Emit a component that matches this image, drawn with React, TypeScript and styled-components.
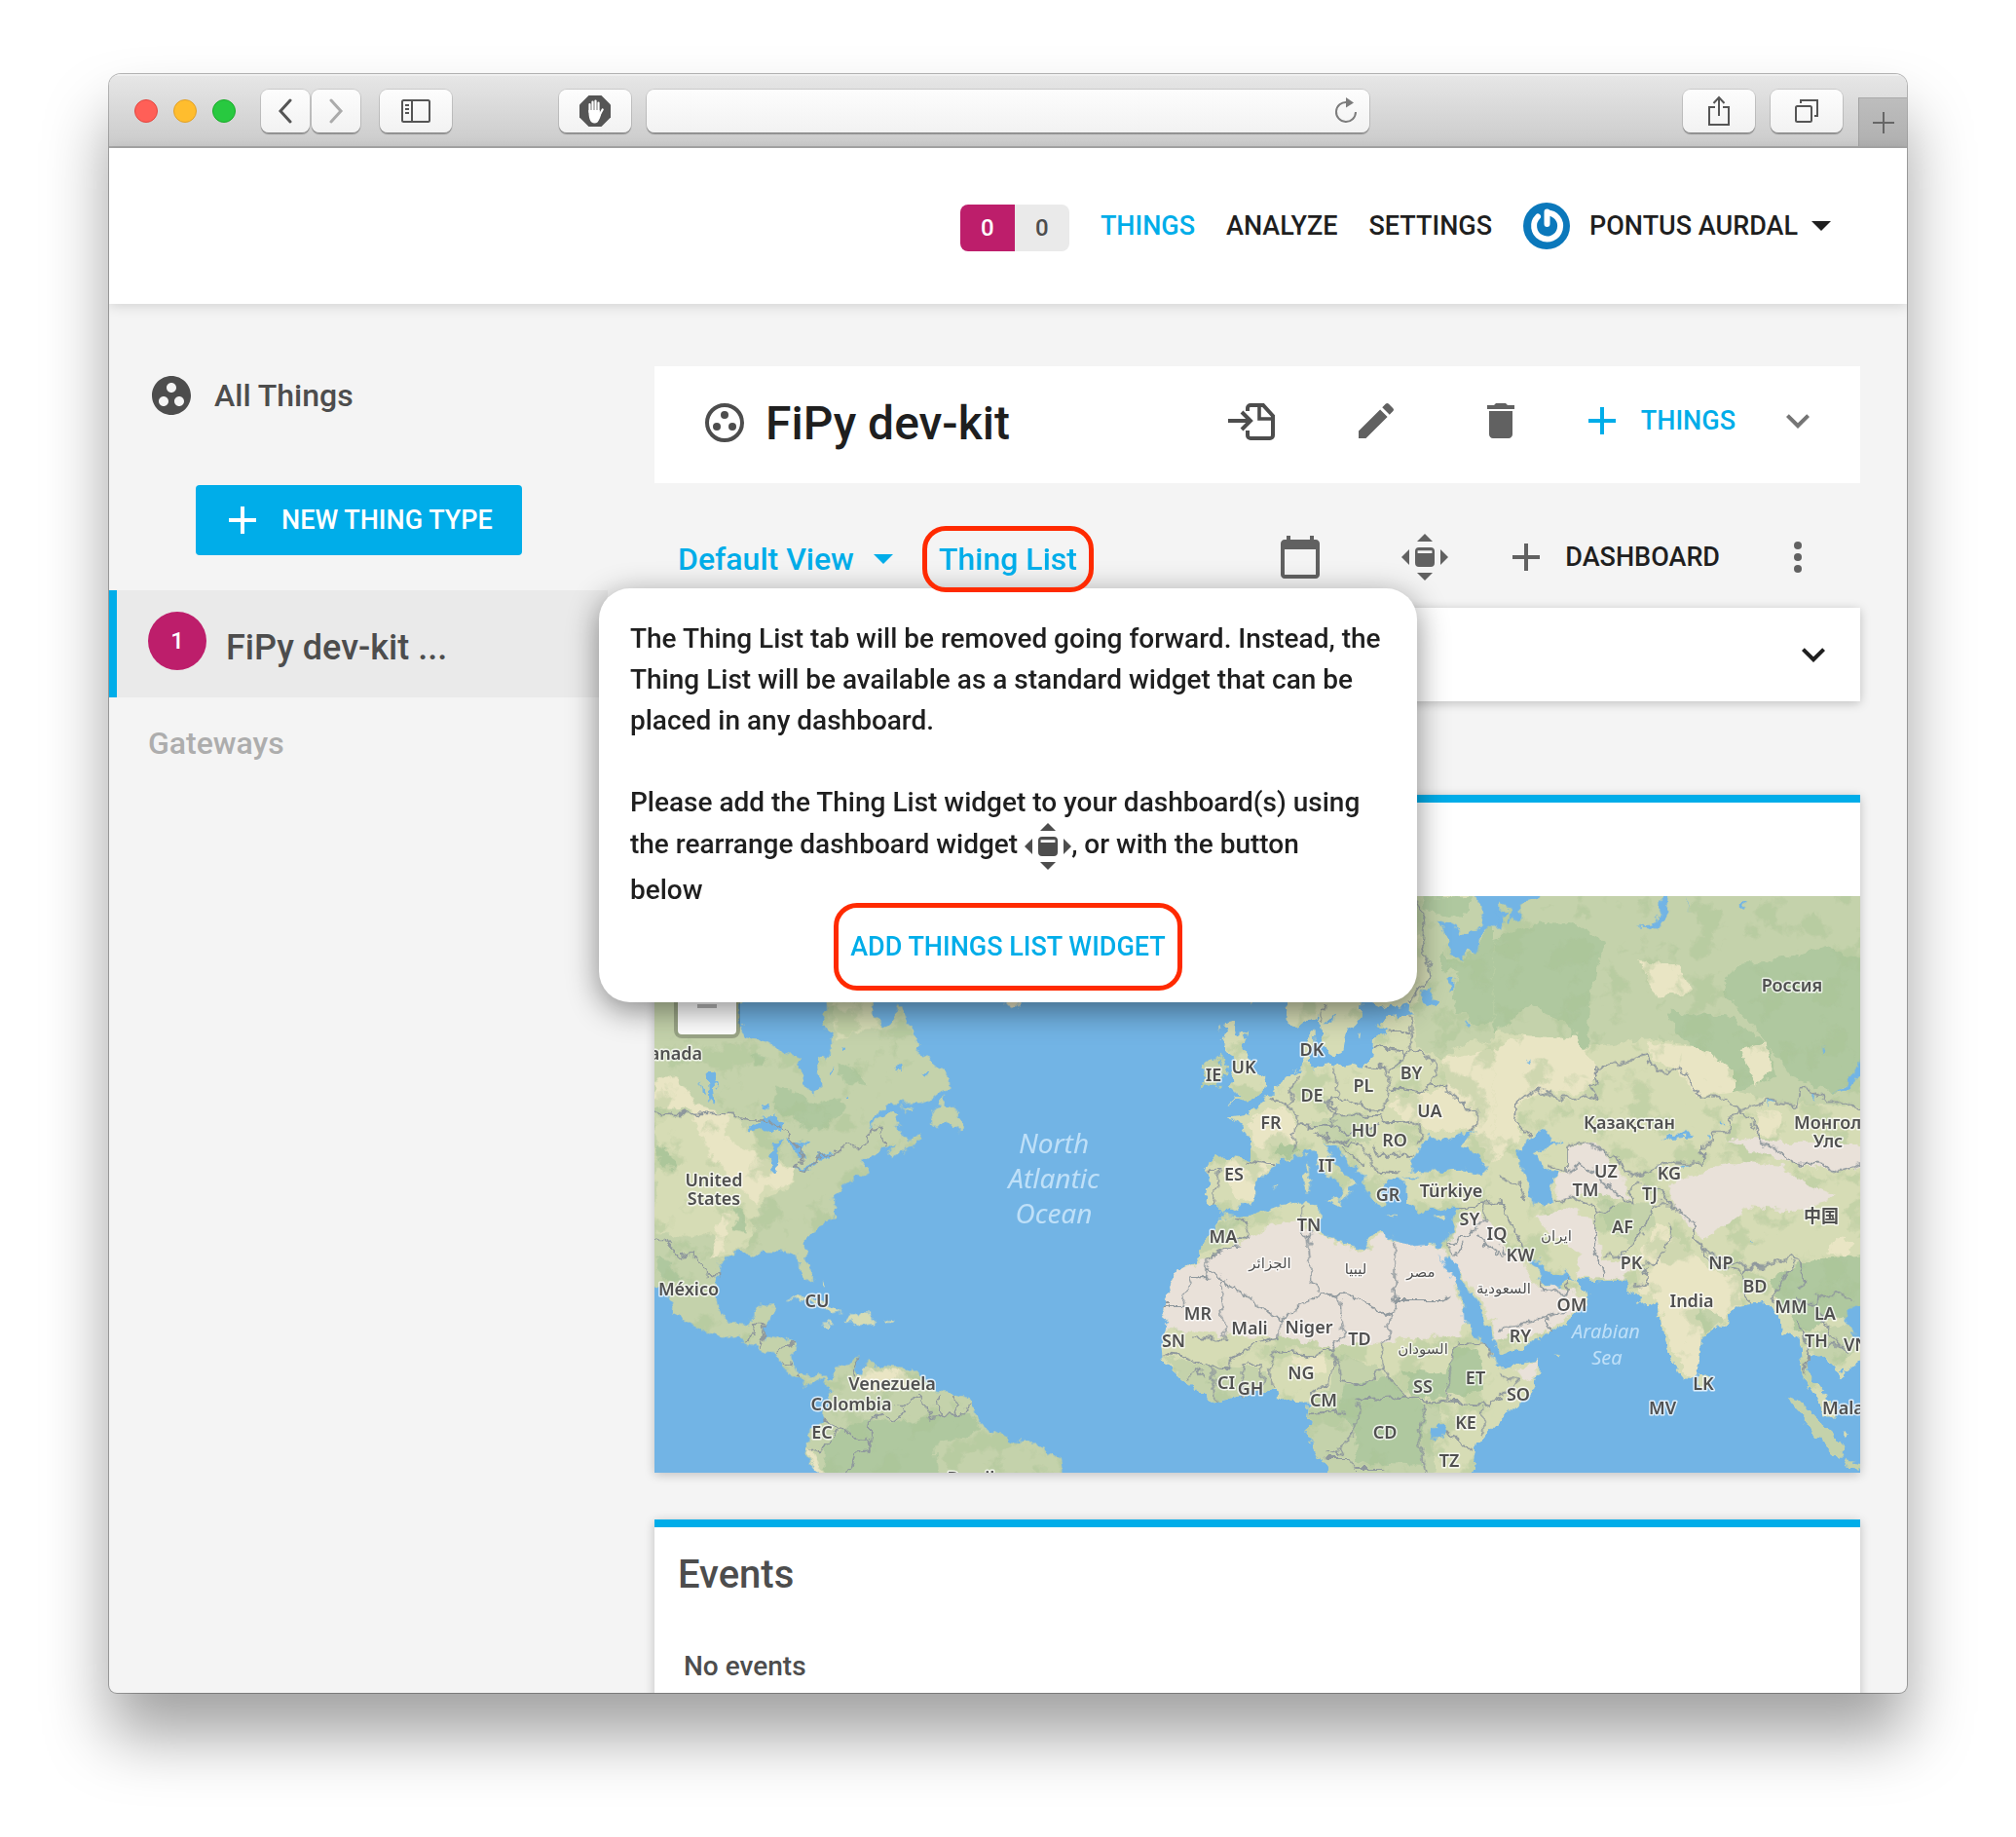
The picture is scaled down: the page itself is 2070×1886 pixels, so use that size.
import React from 'react';
import styled, { createGlobalStyle, css } from 'styled-components';

const color = {
  blue: '#00ade9',
  magenta: '#bd1e6b',
  red: '#ff2a00',
  ink: '#1f1f1f',
  grey: '#4d4d4d',
  icon: '#616161',
  page: '#f4f4f4',
};

const GlobalStyle = createGlobalStyle`
  *, *::before, *::after { box-sizing: border-box; }
  body { margin: 0; background: #fff; font-family: Roboto, "Open Sans", sans-serif; font-weight: 500; color: ${color.ink}; }
  button, input, select { font: inherit; color: inherit; }
  h1, h2, p { margin: 0; padding: 0; font-weight: 500; }
`;

/* ---------- window frame ---------- */

const Desktop = styled.div`
  height: 100vh;
  padding: 76px 112px 148px;
  display: flex;
`;

const Window = styled.div`
  flex: 1;
  min-width: 0;
  display: flex;
  flex-direction: column;
  overflow: hidden;
  border-radius: 12px 12px 8px 8px;
  background: ${color.page};
  box-shadow: 0 0 0 1px rgba(0, 0, 0, 0.28), 0 44px 66px rgba(0, 0, 0, 0.37);
`;

const Toolbar = styled.div`
  flex: none;
  height: 76px;
  display: grid;
  grid-template-columns: minmax(0, 1fr) minmax(0, 742px) minmax(0, 1fr);
  column-gap: 16px;
  align-items: center;
  background: linear-gradient(#e6e6e6, #cbcbcb);
  border-top: 2px solid #efefef;
  border-bottom: 2px solid #a8a8a8;
`;

const ToolbarSide = styled.div<{ $end?: boolean }>`
  height: 100%;
  display: flex;
  align-items: center;
  gap: ${(p) => (p.$end ? '16px' : '20px')};
  padding-left: ${(p) => (p.$end ? '0' : '26px')};
  justify-content: ${(p) => (p.$end ? 'flex-end' : 'flex-start')};
`;

const Lights = styled.div`
  display: flex;
  gap: 16px;
  margin-right: 6px;
`;

const Light = styled.button<{ $fill: string; $edge: string }>`
  width: 24px;
  height: 24px;
  padding: 0;
  border-radius: 50%;
  border: 1px solid ${(p) => p.$edge};
  background: ${(p) => p.$fill};
`;

const ButtonPair = styled.div`
  display: flex;
  gap: 2px;
`;

const chrome = css`
  height: 44px;
  border: 0;
  border-radius: 8px;
  background: linear-gradient(#fdfdfd, #f2f2f2);
  box-shadow: 0 0 0 1px rgba(0, 0, 0, 0.1), 0 2px 1px rgba(0, 0, 0, 0.28);
`;

const ChromeButton = styled.button<{ $narrow?: boolean; $push?: boolean }>`
  ${chrome}
  width: ${(p) => (p.$narrow ? '50px' : '74px')};
  margin-left: ${(p) => (p.$push ? 'auto' : '0')};
  padding: 0;
  display: grid;
  place-items: center;
`;

const Address = styled.div`
  ${chrome}
  display: flex;
  align-items: center;
  padding-right: 10px;
`;

const AddressInput = styled.input`
  flex: 1;
  min-width: 0;
  height: 100%;
  border: 0;
  background: transparent;
  padding: 0 16px;
`;

const BareButton = styled.button`
  border: 0;
  padding: 0;
  background: none;
  display: grid;
  place-items: center;
`;

const NewTab = styled(BareButton)`
  align-self: flex-end;
  width: 50px;
  height: 50px;
  background: linear-gradient(#bdbdbd, #b0b0b0);
  border-left: 1px solid #a2a2a2;
  border-top: 1px solid #aaa;
`;

/* ---------- application header ---------- */

const Header = styled.header`
  flex: none;
  position: relative;
  z-index: 1;
  height: 160px;
  padding-right: 78px;
  display: flex;
  align-items: center;
  justify-content: flex-end;
  gap: 32px;
  background: #fff;
  box-shadow: 0 2px 12px rgba(0, 0, 0, 0.14);
  font-size: 27px;
`;

const Counters = styled.div`
  display: flex;
  height: 48px;
  margin-top: 4px;
  border-radius: 8px;
  overflow: hidden;
`;

const Counter = styled.span<{ $alert?: boolean }>`
  width: 56px;
  display: grid;
  place-items: center;
  font-size: 24px;
  color: ${(p) => (p.$alert ? '#fff' : color.grey)};
  background: ${(p) => (p.$alert ? color.magenta : '#eaeaea')};
`;

const Nav = styled.nav`
  display: flex;
  gap: 32px;
`;

const NavLink = styled.a<{ $active?: boolean }>`
  text-decoration: none;
  color: ${(p) => (p.$active ? color.blue : color.ink)};
`;

const UserButton = styled(BareButton)`
  display: flex;
  align-items: center;
  gap: 20px;
`;

const UserName = styled.span`
  display: flex;
  align-items: center;
  gap: 14px;
`;

/* ---------- sidebar ---------- */

const Body = styled.div`
  flex: 1;
  min-height: 0;
  display: grid;
  grid-template-columns: 512px minmax(0, 1fr);
`;

const Sidebar = styled.aside`
  padding-top: 64px;
  font-size: 32px;
  color: ${color.grey};
`;

const AllThings = styled.a`
  height: 60px;
  padding-left: 40px;
  display: flex;
  align-items: center;
  gap: 20px;
  color: inherit;
  text-decoration: none;
`;

const NewTypeButton = styled.button`
  height: 72px;
  margin: 62px 0 36px 89px;
  padding: 0 30px 0 24px;
  border: 0;
  border-radius: 4px;
  display: flex;
  align-items: center;
  gap: 16px;
  background: ${color.blue};
  color: #fff;
  font-size: 27px;
`;

const TypeLink = styled.a`
  height: 110px;
  padding: 0 0 6px 32px;
  border-left: 8px solid ${color.blue};
  display: flex;
  align-items: center;
  gap: 20px;
  background: #eaeaea;
  color: inherit;
  text-decoration: none;
`;

const TypeName = styled.span`
  padding-top: 14px;
  font-size: 36px;
  line-height: 42px;
`;

const TypeCount = styled.span`
  width: 60px;
  height: 60px;
  border-radius: 50%;
  display: grid;
  place-items: center;
  background: ${color.magenta};
  color: #fff;
  font-size: 24px;
`;

const SectionLabel = styled.h2`
  padding: 26px 40px;
  font-size: 32px;
  line-height: 42px;
  color: #adadad;
`;

/* ---------- main column ---------- */

const Main = styled.main`
  padding: 64px 48px 0;
  min-height: 0;
`;

const TitleCard = styled.section`
  height: 120px;
  padding: 0 40px 4px 48px;
  display: flex;
  align-items: center;
  gap: 18px;
  background: #fff;
`;

const Title = styled.h1`
  font-size: 48px;
`;

const Actions = styled.div`
  margin-left: auto;
  padding-bottom: 4px;
  display: flex;
  align-items: center;
  gap: 80px;
`;

const ActionGroup = styled.div<{ $wide?: boolean }>`
  display: flex;
  align-items: center;
  gap: ${(p) => (p.$wide ? '56px' : '40px')};
  margin-left: -24px;
`;

const IconButton = styled(BareButton)<{ $tone?: string }>`
  color: ${(p) => p.$tone || color.icon};
`;

const TextButton = styled(BareButton)<{ $tone?: string }>`
  display: flex;
  align-items: center;
  gap: 16px;
  font-size: 27px;
  color: ${(p) => p.$tone || color.ink};
`;

const ViewBar = styled.div`
  height: 68px;
  margin: 44px 0 16px;
  padding: 0 40px 0 24px;
  display: flex;
  align-items: center;
`;

const ViewPicker = styled.label`
  display: flex;
  align-items: center;
  gap: 20px;
  margin-right: 30px;
  color: ${color.blue};
`;

const ViewSelect = styled.select`
  appearance: none;
  border: 0;
  padding: 0;
  background: none;
  font-size: 32px;
  line-height: 42px;
`;

const PopoverAnchor = styled.div`
  position: relative;
  z-index: 2;
`;

const outlined = css`
  border: 5px solid ${color.red};
  border-radius: 24px;
  background: none;
  color: ${color.blue};
`;

const TabButton = styled.button`
  ${outlined}
  position: relative;
  z-index: 1;
  height: 68px;
  padding: 0 12px;
  font-size: 32px;
`;

const Popover = styled.div`
  position: absolute;
  top: 64px;
  left: 50%;
  width: 840px;
  transform: translateX(-50%);
  padding: 31px 32px 12px;
  border-radius: 32px;
  background: #fff;
  box-shadow: 0 8px 32px rgba(0, 0, 0, 0.45);
  display: flex;
  flex-direction: column;
`;

const Message = styled.p`
  font-size: 28px;
  line-height: 42px;
  & + & { margin-top: 42px; }
  svg { vertical-align: middle; color: ${color.grey}; }
`;

const AddWidgetButton = styled.button`
  ${outlined}
  align-self: center;
  height: 90px;
  margin-top: -8px;
  padding: 0 12px;
  font-size: 27px;
`;

const Card = styled.section<{ $accent?: boolean; $gap?: number }>`
  margin-top: ${(p) => p.$gap || 0}px;
  border-top: ${(p) => (p.$accent ? `8px solid ${color.blue}` : '0')};
  background: #fff;
  box-shadow: 0 2px 10px rgba(0, 0, 0, 0.22);
`;

const FilterRow = styled.div`
  height: 96px;
  padding-right: 24px;
  display: flex;
  align-items: center;
  justify-content: flex-end;
`;

const CardTitle = styled.h2`
  height: 96px;
  padding: 0 24px;
  display: flex;
  align-items: center;
  font-size: 40px;
  color: ${color.grey};
`;

const CardText = styled.p`
  padding: 26px 30px;
  font-size: 28px;
  line-height: 42px;
  color: ${color.grey};
`;

/* ---------- map ---------- */

const MapFrame = styled.div`
  position: relative;
  overflow: hidden;
`;

const MapDrawing = styled.svg`
  display: block;
  width: 100%;
  height: auto;
  background: #72b4e5;
  font-family: "Noto Sans", "DejaVu Sans", "Noto Sans CJK SC", sans-serif;
`;

const ZoomControl = styled.div`
  position: absolute;
  left: 20px;
  top: 18px;
  border: 4px solid rgba(0, 0, 0, 0.22);
  border-radius: 8px;
  background: #fff padding-box;
`;

const ZoomButton = styled(BareButton)`
  width: 60px;
  height: 60px;
  & + & { border-top: 1px solid #ccc; }
`;

const Place = styled.text<{ $small?: boolean }>`
  font-size: ${(p) => (p.$small ? '15px' : '18px')};
  font-weight: ${(p) => (p.$small ? 400 : 600)};
  fill: #505050;
  stroke: #fff;
  stroke-width: 3px;
  stroke-opacity: 0.75;
  stroke-linejoin: round;
  paint-order: stroke;
`;

const Sea = styled.text<{ $size: number }>`
  font-size: ${(p) => p.$size}px;
  font-weight: 400;
  font-style: italic;
  fill: #bfe0f8;
  text-anchor: middle;
`;

type Anchor = 'start' | 'middle' | 'end';

const places: [string, number, number, Anchor?][] = [
  ['Canada', 721, 1088, 'end'], ['United', 733, 1218], ['States', 733, 1237],
  ['México', 707, 1330], ['CU', 839, 1342], ['Venezuela', 916, 1427],
  ['Colombia', 874, 1448], ['EC', 844, 1477], ['Brasil', 997, 1524],
  ['DK', 1347, 1084], ['IE', 1246, 1110], ['UK', 1277, 1102], ['DE', 1347, 1131],
  ['PL', 1400, 1121], ['BY', 1449, 1108], ['UA', 1468, 1147], ['FR', 1305, 1159],
  ['HU', 1401, 1167], ['RO', 1432, 1177], ['IT', 1362, 1203], ['ES', 1267, 1212],
  ['GR', 1425, 1233], ['Türkiye', 1490, 1229], ['SY', 1509, 1258], ['IQ', 1537, 1273],
  ['TN', 1344, 1264], ['MA', 1256, 1276], ['MR', 1230, 1355], ['Mali', 1283, 1370],
  ['Niger', 1344, 1369], ['TD', 1396, 1381], ['SN', 1205, 1383], ['CI', 1259, 1426],
  ['GH', 1284, 1432], ['NG', 1336, 1416], ['CM', 1359, 1444], ['SS', 1461, 1430],
  ['ET', 1515, 1421], ['CD', 1422, 1477], ['KE', 1505, 1467], ['TZ', 1488, 1506],
  ['KW', 1561, 1295], ['OM', 1614, 1346], ['RY', 1561, 1378],
  ['SO', 1559, 1438], ['AF', 1666, 1266], ['PK', 1675, 1303],
  ['NP', 1767, 1303], ['India', 1737, 1342], ['BD', 1802, 1327], ['MM', 1839, 1348],
  ['LA', 1874, 1355], ['TH', 1865, 1383], ['VN', 1893, 1387, 'start'], ['LK', 1749, 1427],
  ['MV', 1707, 1452], ['Malaysia', 1871, 1452, 'start'], ['UZ', 1649, 1209], ['TM', 1628, 1228],
  ['KG', 1714, 1211], ['TJ', 1694, 1232], ['Қазақстан', 1673, 1159],
  ['Монгол', 1842, 1159, 'start'], ['Улс', 1877, 1178], ['中国', 1870, 1255], ['Россия', 1840, 1018],
];

const arabicPlaces: [string, number, number][] = [
  ['الجزائر', 1304, 1302], ['ليبيا', 1392, 1308], ['مصر', 1459, 1311],
  ['السودان', 1461, 1390], ['السعودية', 1544, 1328], ['ایران', 1598, 1274],
];

const seas: [string, number, number, number][] = [
  ['North', 1082, 1184, 28], ['Atlantic', 1082, 1220, 28], ['Ocean', 1082, 1256, 28],
  ['Arabian', 1649, 1374, 20], ['Sea', 1650, 1401, 20],
];

const AMERICAS = 'translate(660 1000) scale(.33333)';
const EUROPE = 'translate(1160 900) scale(.33333 .3954)';
const ASIA = 'translate(1540 900) scale(.33333 .3954)';

const water = '#72b4e5';
const pale = '#d6dcb5';
const sand = '#e9e5c4';
const green = '#c4d2ab';
const forest = '#afc89f';
const desert = '#e9e1d9';

type Shape = [string, string];

const americas: Shape[] = [
  [green, '36,-260 300,-260 300,150 312,195 345,200 390,215 430,240 485,262 490,310 510,345 527,368 548,345 540,300 535,268 565,255 583,225 580,190 550,150 568,115 565,60 700,60 710,125 740,160 770,135 785,90 800,125 822,160 840,195 843,230 880,262 915,285 938,315 940,350 910,365 880,390 850,397 760,400 735,420 705,450 690,478 720,450 750,430 790,430 775,450 790,475 800,500 830,510 855,490 865,508 830,525 790,550 765,565 762,545 780,525 745,535 700,560 685,575 692,610 650,628 625,640 610,670 597,698 585,700 595,720 590,750 560,770 520,800 500,830 502,870 520,910 522,940 505,945 485,910 478,870 455,858 420,850 365,850 355,868 320,858 275,862 235,890 228,930 225,980 235,1030 262,1070 320,1075 340,1060 350,1020 405,1018 400,1050 380,1080 372,1120 400,1125 440,1115 470,1135 462,1170 465,1200 475,1225 510,1240 545,1230 575,1250 570,1270 550,1245 515,1265 480,1250 430,1218 425,1190 395,1165 360,1155 310,1138 290,1110 250,1120 190,1100 130,1070 95,1040 90,1010 60,970 20,940 20,-260'],
  [green, '570,1255 600,1215 630,1200 665,1180 650,1215 665,1240 690,1195 740,1210 800,1215 830,1212 845,1225 860,1250 905,1280 965,1290 1005,1310 1020,1345 1035,1385 1080,1405 1130,1435 1210,1445 1250,1475 1290,1490 1296,1560 550,1560 505,1480 510,1450 515,1400 560,1370 570,1320 580,1290'],
  [green, '940,362 930,395 965,420 975,440 990,465 985,490 970,475 940,460 880,462 895,430 915,395'],
  [green, '795,405 830,415 835,425 810,420'],
  [pale, '448,1005 480,988 530,1000 575,1020 622,1040 580,1045 560,1025 500,1002'],
  [pale, '640,1050 690,1048 720,1070 670,1080 650,1070 620,1075'],
  [pale, '557,1072 587,1075 575,1082'],
  [pale, '745,1070 768,1074 760,1080 746,1078'],
  [pale, '555,950 566,965 558,968'],
  [sand, '1110,60 1160,60 1155,95 1140,108 1120,95'],
  [pale, '585,84 700,84 712,140 740,170 700,175 650,180 600,210 590,160'],
  [pale, '36,435 270,435 330,480 380,540 470,600 470,650 380,690 340,760 330,840 240,870 215,800 130,810 36,800'],
  [sand, '36,330 90,315 130,350 165,410 262,430 250,500 350,560 470,600 465,650 370,660 350,720 290,640 210,560 160,450 150,415 36,412'],
  [sand, '240,740 270,735 265,800 230,870 210,880 225,800'],
  [forest, '410,350 480,370 520,400 600,380 630,410 560,470 510,490 460,440 400,420'],
  [forest, '330,240 385,250 370,280 340,270'],
  [forest, '36,530 80,540 100,600 60,590'],
  [forest, '280,720 310,740 320,800 290,790'],
  [forest, '600,270 660,300 690,350 620,330'],
  [forest, '36,870 70,880 120,940 90,950 50,920'],
  [forest, '620,1400 690,1370 780,1380 1010,1350 1040,1400 980,1430 900,1450 910,1560 560,1560 560,1450'],
  [sand, '680,1210 800,1230 850,1260 720,1290 640,1260'],
  [sand, '510,1450 530,1490 560,1540 580,1560 545,1560 515,1490'],
];

const americanWater = [
  '320,488 345,465 395,435 440,465 430,490 375,475', '400,520 430,505 415,540 418,590 400,608 390,570',
  '440,505 480,515 520,520 490,545 495,570 480,565 465,530', '470,605 540,575 545,585 480,612',
  '540,560 585,550 580,568 545,572', '200,300 220,300 235,350 215,340 220,400 205,390',
  '180,330 195,370 185,365', '372,400 386,402 382,418 374,416', '570,300 590,292 580,306',
  '775,292 800,284 800,296 780,298', '625,380 640,370 634,384', '862,302 882,295 874,308',
  '610,225 628,232 618,238', '660,1215 675,1218 672,1235 662,1230',
];

const europe: Shape[] = [
  [pale, '700,0 1150,0 1150,1265 1130,1272 1145,1360 1150,1405 1110,1440 1070,1480 1050,1580 630,1580 600,1500 545,1440 555,1365 480,1362 430,1330 340,1350 260,1362 165,1310 105,1260 100,1210 118,1150 100,1110 160,1015 200,1000 230,960 290,875 265,850 230,845 245,770 230,750 240,735 300,728 365,732 370,690 350,650 325,640 312,625 358,620 365,605 400,600 425,565 465,545 480,520 525,505 535,480 525,440 565,405 570,430 550,455 548,480 570,500 610,490 640,495 690,485 720,490 745,475 750,420 770,410 800,400 762,385 795,365 868,355 870,330 790,343 750,325 705,320'],
  [pale, '478,300 720,300 710,365 675,400 665,450 615,465 590,410 580,362 545,378 520,395 485,370'],
  [pale, '300,385 335,378 325,405 358,408 345,440 365,470 385,510 418,525 412,560 385,575 330,575 297,592 330,560 302,550 325,530 310,510 325,470 300,455 283,425'],
  [green, '250,475 285,465 295,500 275,540 215,555 235,525 220,495'],
  [green, '840,51 1150,51 1150,420 1050,430 960,470 880,440 870,355 900,300 925,250 900,180'],
  [forest, '900,51 1060,51 1030,100 960,100 905,80'],
  [forest, '1090,150 1150,100 1150,380 1060,380 1000,330 1010,250 960,240 960,200 1030,225'],
  [sand, '960,470 1110,450 1150,470 1150,760 1090,720 1060,650 950,660 860,640 800,590 830,570 930,560 970,540'],
  [sand, '290,728 440,745 390,790 380,835 340,840 300,800'],
  [sand, '370,620 480,600 510,640 500,700 380,700'],
  [forest, '470,690 530,710 500,735 440,720'],
  [green, '560,640 700,610 760,660 730,690 600,690'],
  [desert, '245,990 330,955 440,905 520,890 560,920 640,950 720,975 780,925 820,945 970,965 1000,1060 1035,1150 1010,1195 900,1195 770,1215 620,1220 480,1195 300,1190 110,1175 118,1150 100,1110 160,1015'],
  [desert, '1010,905 1070,870 1150,930 1150,1180 1100,1130 1050,1060 1000,1010 980,950'],
  [green, '230,945 290,885 350,890 270,975 220,975'],
  [green, '105,1245 250,1270 420,1280 440,1330 340,1350 260,1362 165,1310'],
  [sand, '480,1220 610,1225 600,1290 500,1260'],
  [green, '640,1240 760,1270 850,1350 960,1365 930,1580 630,1580 545,1440 560,1365 620,1320'],
  [forest, '660,1320 800,1295 850,1350 915,1370 900,1450 900,1530 700,1520 690,1430 640,1400'],
  [forest, '1000,1230 1080,1230 1090,1340 1000,1350 960,1310'],
  [forest, '840,1280 970,1290 980,1350 870,1350'],
];

const europeWater = [
  '285,872 300,868 330,858 380,840 390,790 440,755 450,735 500,738 540,712 570,725 590,765 640,790 660,815 650,840 680,825 680,805 705,795 660,770 630,745 605,712 600,690 635,698 660,735 700,760 722,780 725,810 760,855 785,855 775,815 780,790 830,780 850,800 855,850 880,870 930,862 960,865 1010,855 1000,900 975,950 965,962 920,955 870,960 815,940 775,925 740,935 725,968 690,960 640,945 600,930 575,905 585,870 570,855 540,850 460,855 380,880 340,885 300,880',
  '890,705 865,740 870,765 930,768 1000,760 1080,778 1100,745 1060,712 1020,705 1060,655 1010,672 960,690 925,670',
  '1065,40 1090,95 1080,135 1030,148 990,130 945,118 985,165 985,190 1030,220 1040,195 1068,190 1075,150 1140,125 1145,90 1140,40',
  '1162,85 1140,95 1150,110', '900,300 925,292 950,320 925,340 905,325',
  '980,260 1000,262 1000,300 982,300 988,285', '1035,372 1052,380 1042,392',
  '600,380 630,362 628,378', '935,1430 970,1428 960,1455 930,1455', '845,783 885,780 880,788',
  '945,975 970,1005 985,985 1010,1010 1020,1040 1060,1090 1085,1130 1120,1200 1135,1245 1160,1240 1160,1262 1140,1275 1120,1240 1070,1195 1030,1150 1025,1090 1000,1055',
];

const europeIslands = [
  '535,772 552,768 555,812 538,816', '540,748 550,742 552,765 544,764', '605,838 650,832 645,857',
  '792,880 830,883 828,888 794,884', '943,890 972,882 962,896', '435,803 450,800 444,808',
  '700,405 712,400 706,425', '365,326 372,326 370,340', '270,390 282,385 272,402',
];

const asia: Shape[] = [
  [pale, '-20,30 1130,30 1130,1240 1090,1270 1040,1300 1045,1275 1010,1260 990,1240 945,1240 950,1290 985,1320 1010,1350 1035,1400 1000,1400 995,1380 965,1340 935,1300 930,1230 920,1200 900,1185 865,1195 860,1150 830,1110 800,1105 735,1115 680,1165 620,1200 618,1240 610,1285 575,1310 555,1300 530,1250 500,1180 490,1105 450,1118 425,1100 440,1090 400,1075 385,1048 310,1050 225,1045 265,1080 270,1105 240,1130 200,1160 140,1190 60,1225 -20,1250'],
  [pale, '-20,1280 122,1255 120,1285 90,1345 60,1375 -20,1415'],
  [green, '-20,30 1130,30 1130,600 900,590 740,560 600,440 460,420 280,440 200,420 -20,400'],
  [forest, '-20,160 120,120 240,125 330,170 280,290 270,420 240,540 215,520 230,400 100,330 -20,410'],
  [forest, '720,230 900,210 1000,180 1130,220 1130,500 1030,560 900,520 820,430 740,350 690,300'],
  [forest, '520,350 700,360 830,440 850,520 720,560 640,480 540,400'],
  [sand, '-20,450 80,410 240,420 300,500 270,560 120,560 50,600 70,680 -20,740'],
  [sand, '430,220 560,230 590,300 480,310'],
  [sand, '460,430 600,440 720,500 720,560 610,570 550,500 470,480'],
  [sand, '740,450 820,430 840,500 790,540'],
  [sand, '800,600 870,610 860,680 790,670'],
  [desert, '210,700 300,690 380,780 400,840 280,820 180,840 170,780 210,770'],
  [desert, '110,880 210,860 290,890 320,1000 400,990 380,1045 230,1040 250,980 160,930'],
  [desert, '520,800 700,740 860,750 950,800 1040,830 900,870 760,860 640,940 590,920 530,850'],
  [desert, '700,680 860,690 1110,690 1130,750 1040,765 900,745 780,710'],
  [desert, '-20,950 60,980 110,1060 220,1070 270,1105 140,1185 -20,1200'],
  [sand, '480,900 560,950 640,1020 740,1040 740,1110 620,1190 610,1290 570,1300 510,1180 490,1100 430,1080 420,1000'],
  [green, '620,1110 690,1150 630,1190 610,1150'],
  [forest, '830,1050 930,1000 1130,980 1130,1110 1060,1140 1010,1150 920,1190 860,1100'],
  [sand, '1030,940 1090,950 1070,990 1010,980'],
  [green, '300,840 460,850 480,900 400,960 320,900'],
  [green, '930,1190 1090,1160 1100,1240 1040,1270 950,1230'],
  [desert, '50,1280 122,1255 110,1300 80,1310'],
  [green, '878,1350 930,1365 980,1410 1030,1450 1055,1480 1050,1510 1000,1480 950,1420 900,1375'],
  [green, '1055,1515 1130,1525 1130,1540 1065,1530'],
  [pale, '612,1290 640,1305 635,1335 610,1330'],
  [pale, '162,1243 178,1244 170,1249'],
  [pale, '1045,1445 1062,1450 1058,1460'],
];

const asiaWater = [
  '50,705 80,690 120,660 155,665 150,690 185,690 165,700 110,710 125,740 150,765 180,770 160,790 165,855 130,858 88,835 95,800 65,750',
  '85,985 110,990 135,1020 190,1035 215,1025 225,1048 200,1050 175,1068 130,1055 105,1010',
  '1058,1140 1090,1110 1130,1108 1130,1215 1085,1180', '505,690 520,670 600,668 590,676 530,680',
  '498,40 525,40 515,100 480,138 432,128 470,125 495,95',
  '-10,40 150,40 110,60 60,75 65,110 25,115 35,80 -10,65', '-10,90 8,100 0,140 -10,130',
  '1025,555 1060,545 1120,465 1120,505 1070,550', '75,485 100,465 92,480', '740,75 760,65 750,90',
  '560,750 585,745 570,756', '640,670 650,672 645,690', '960,560 972,562 964,582',
  '985,450 1000,446 992,456', '825,580 845,585 830,592', '668,632 695,638 680,642',
  '568,55 585,90 575,75', '762,942 775,944 768,948',
];

const borders: [string, string[]][] = [
  [AMERICAS, [
    'M36 430H268L280 438 320 450 380 450 430 480 470 520 488 535 488 580 470 600 484 610 540 580 545 562 585 558 610 530 665 530 690 515 700 475 718 470 732 485 737 515 748 532',
    'M36 820 75 820 110 870 150 858 175 880 200 925 232 934', 'M318 1138 330 1105 345 1108 332 1082 372 1082 368 1120 360 1148 M380 1082 372 1118 M405 1168 430 1145 468 1135 M428 1200 462 1205 M475 1225 478 1248',
    'M668 1185 645 1215 650 1240 M550 1370 605 1392 650 1430 690 1435 695 1465 M604 1392 590 1430 540 1475 518 1465 M860 1300 820 1325 790 1325 808 1352 775 1378 745 1358 700 1368 692 1395 705 1410 695 1465 650 1485 630 1540',
    'M850 1290 870 1310 872 1350 880 1368 930 1358 985 1355 1005 1320 M912 1292 902 1325 930 1358 M962 1295 968 1350',
  ]],
  [EUROPE, [
    'M440 750 360 738 M245 765 282 762 265 810 262 850', 'M510 720 508 680 495 665 520 640 500 600 430 570 M520 645 620 650 640 600 605 585 640 570 632 500 M495 600 490 560 515 520',
    'M640 570 775 610 800 560 790 500 740 490 M605 590 640 620 770 622 M750 440 830 450 845 470 795 500 M800 400 860 412 865 450 915 460 945 510 925 540 900 560 805 548',
    'M865 450 845 470 M860 360 865 410 M925 540 970 545 1000 580 1075 605 1070 640 1050 655 M775 625 770 640 840 635 880 630 900 670 880 695 M620 650 670 665 760 650 M650 690 715 700 M745 700 775 725 870 725 M715 700 760 765 830 770 M560 665 650 690 680 680 M655 700 720 750',
    'M240 990 330 960 325 935 370 938 362 895 320 890 M240 990V1040H185L165 1110H100 M240 1020 455 1145 470 1145 590 1080 M535 855 530 920 550 940 560 920 M550 940 560 1050 590 1080 645 1090 660 1080 800 1140 M815 945 818 1130 800 1138 798 1195 770 1215 780 1270 M818 1100H960L990 1090',
    'M280 1055 292 1200H190 M280 1055 305 1052 M465 1145 462 1195 390 1210 M645 1090 658 1180 620 1225 640 1255 600 1320 560 1350 M390 1210 300 1260 300 1280 M345 1268 405 1270 410 1330 M440 1330 430 1260 455 1230 560 1245 620 1225 M345 1268 350 1350 M250 1275 262 1360 M105 1240 165 1245 250 1275 300 1278 M180 1310 200 1280 230 1300',
    'M640 1255 655 1310 720 1320 780 1270 M780 1270 800 1300 855 1355 M700 1360 855 1352 985 1365 M705 1365 690 1440 640 1500 600 1495 M555 1395 665 1392 M980 1365 990 1250 1010 1215 1100 1215 1120 1250 M985 1365 1100 1370 1150 1355 M1090 1375 1088 1450 M600 1510H670L690 1540 780 1540 M915 1370 890 1440 900 1500 915 1550 M965 1440 1055 1490',
    'M1005 860 1090 848 1150 850 M1090 850 1090 890 1060 920 980 955 M1060 930 1150 990 M980 960 1000 985 1035 955',
    'M860 51 905 95 900 180 930 250 865 325 M590 370 605 325',
  ]],
  [ASIA, [
    'M90 675 45 625 50 590 120 552 180 575 300 575 275 545 300 535 290 500 455 465 465 495 510 510 560 490 620 575 680 575 740 608 830 580 920 598 925 560 940 545 1010 585 1060 585 1120 610',
    'M740 608 800 660 800 695 865 710 895 745 980 745 1040 765 1120 745 M740 608 710 625 708 660 662 660 660 695 620 700 625 745 500 740 460 770 420 780 385 770 365 728 340 725 300 700 245 690 207 700V770',
    'M150 755 207 770 250 745 390 845 410 848 400 810 430 795 M170 848 220 830 290 860 300 880 360 850 M300 880 290 970 325 1040 M325 985 380 980 440 930 470 850 520 850 600 900 600 940 640 975 720 1005 820 1010 900 990 930 1000 935 1060 915 1070',
    'M445 1010 480 1005 530 930 520 900 M445 1020 460 1060 410 1065 M0 780 60 800 80 840 M0 840 30 900 70 950 75 980 M0 960 15 985 M125 1050 140 1080 200 1085 210 1040 M140 1145 155 1185 M0 1170 60 1165 140 1145 205 1125',
    'M630 970 640 1000 750 1030 755 1010 820 1015 M752 1030 758 1080 770 1110 M835 1100 870 1050 910 1000 M910 1090 960 1110 990 1090 1060 1085 1080 1100 M915 1150 950 1230 940 1290 M980 1130 1030 1200 1070 1240 M1010 1215 1060 1218 M440 800 500 815 520 850 M0 1295 60 1310 0 1350',
  ]],
];

const fertile = (shapes: Shape[]) => shapes.filter(([fill]) => fill !== desert);
const arid = (shapes: Shape[]) => shapes.filter(([fill]) => fill === desert);

function WorldMap() {
  const draw = (shapes: Shape[]) => shapes.map(([fill, pts], i) => <polygon key={i} fill={fill} points={pts} />);
  const pools = (list: string[], fill = water) => list.map((pts, i) => <polygon key={i} fill={fill} points={pts} />);
  return (
    <MapDrawing viewBox="672 920 1238 592" role="img" aria-label="World map">
      <defs>
        <filter id="terrain" filterUnits="userSpaceOnUse" x="652" y="900" width="1278" height="632" colorInterpolationFilters="sRGB">
          <feTurbulence type="fractalNoise" baseFrequency="0.09" numOctaves={3} seed={4} result="rough" />
          <feDisplacementMap in="SourceGraphic" in2="rough" scale={13} xChannelSelector="R" yChannelSelector="G" />
        </filter>
        <filter id="mottle" filterUnits="userSpaceOnUse" x="652" y="900" width="1278" height="632" colorInterpolationFilters="sRGB">
          <feTurbulence type="fractalNoise" baseFrequency="0.03" numOctaves={4} seed={11} />
          <feColorMatrix values="0 0 0 0 .66  0 0 0 0 .76  0 0 0 0 .58  9 0 0 0 -5" result="spots" />
          <feComposite in="spots" in2="SourceAlpha" operator="in" />
        </filter>
      </defs>
      <rect x="672" y="920" width="1238" height="592" fill={water} />
      <g filter="url(#terrain)">
        <g transform={EUROPE}>{draw(fertile(europe))}</g>
        <g transform={ASIA}>{draw(fertile(asia))}</g>
        <g transform={AMERICAS}>{draw(americas)}</g>
        <g filter="url(#mottle)" opacity="0.4">
          <g transform={EUROPE}>{draw(europe.slice(0, 4))}</g>
          <g transform={ASIA}>{draw(asia.slice(0, 1))}</g>
          <g transform={AMERICAS}>{draw(americas.slice(0, 2))}</g>
        </g>
        <g transform={EUROPE}>
          {draw(arid(europe))}
          {pools(europeWater)}
          {pools(europeIslands, pale)}
        </g>
        <g transform={ASIA}>
          {draw(arid(asia))}
          {pools(asiaWater)}
        </g>
        <g transform={AMERICAS}>{pools(americanWater)}</g>
        {borders.map(([transform, paths]) => (
          <g key={transform} transform={transform} fill="none" stroke="#8f989d" strokeWidth="5" strokeLinejoin="round">
            {paths.map((d) => <path key={d} d={d} />)}
          </g>
        ))}
      </g>
      {seas.map(([name, x, y, size]) => <Sea key={name} x={x} y={y} $size={size}>{name}</Sea>)}
      {arabicPlaces.map(([name, x, y]) => (
        <Place key={name} x={x} y={y} textAnchor="middle" $small>{name}</Place>
      ))}
      {places.map(([name, x, y, anchor]) => (
        <Place key={name} x={x} y={y} textAnchor={anchor || 'middle'}>{name}</Place>
      ))}
    </MapDrawing>
  );
}

/* ---------- icons ---------- */

type IconProps = { size?: number; children: React.ReactNode };

const Icon = ({ size = 48, children }: IconProps) => (
  <svg width={size} height={size} viewBox="0 0 24 24" fill="currentColor" aria-hidden="true">{children}</svg>
);

const PlusIcon = () => <Icon><path d="M19 13h-6v6h-2v-6H5v-2h6V5h2v6h6v2z" /></Icon>;
const ChevronIcon = () => <Icon><path d="M16.59 8.59 12 13.17 7.41 8.59 6 10l6 6 6-6z" /></Icon>;
const RearrangeIcon = () => (
  <Icon>
    <path d="M12 0l4 4H8zM12 24l4-4H8zM0 12l4-4v8zM24 12l-4-4v8z" />
    <path fillRule="evenodd" d="M9 7h6a2 2 0 0 1 2 2v6a2 2 0 0 1-2 2H9a2 2 0 0 1-2-2V9a2 2 0 0 1 2-2zm-.7 1.6v1.4h7.4V8.600z" />
  </Icon>
);
const Caret = ({ width = 20 }: { width?: number }) => (
  <svg width={width} height={width / 2} viewBox="0 0 20 10" fill="currentColor" aria-hidden="true"><path d="M0 0h20L10 10z" /></svg>
);

const Line = ({ w, h, tone = '#555', width = 2, children }: { w: number; h: number; tone?: string; width?: number; children: React.ReactNode }) => (
  <svg width={w} height={h} viewBox={`0 0 ${w} ${h}`} fill="none" stroke={tone} strokeWidth={width} aria-hidden="true">{children}</svg>
);

export default function App() {
  return (
    <>
      <GlobalStyle />
      <Desktop>
        <Window>
          <Toolbar>
            <ToolbarSide>
              <Lights>
                <Light aria-label="Close" $fill="#ff5f57" $edge="#e2463f" />
                <Light aria-label="Minimize" $fill="#ffbd2e" $edge="#e0a028" />
                <Light aria-label="Zoom" $fill="#28c940" $edge="#1aab29" />
              </Lights>
              <ButtonPair>
                <ChromeButton $narrow aria-label="Back">
                  <Line w={16} h={26} width={3}><path d="M13 2 3 13l10 11" strokeLinecap="round" /></Line>
                </ChromeButton>
                <ChromeButton $narrow aria-label="Forward">
                  <Line w={16} h={26} width={3} tone="#ababab"><path d="M3 2l10 11L3 24" strokeLinecap="round" /></Line>
                </ChromeButton>
              </ButtonPair>
              <ChromeButton aria-label="Show sidebar">
                <Line w={30} h={24}>
                  <rect x="1" y="1" width="28" height="22" rx="1.500" />
                  <path d="M11 1v22M4 6h4M4 10h4M4 14h4" />
                </Line>
              </ChromeButton>
              <ChromeButton $push aria-label="Content blocker">
                <svg width="32" height="32" viewBox="0 0 32 32" aria-hidden="true">
                  <path fill="#555" d="M9.500 0h13L32 9.500v13L22.500 32h-13L0 22.500v-13z" />
                  <path fill="none" stroke="#fff" strokeWidth="2.200" strokeLinecap="round" d="M10.500 17V9M13.500 16V6.500M16.500 16V5.500M19.500 17V7.500M20 21l3.700-6.500" />
                  <path fill="#fff" d="M9.400 15h11.200l.4 4 1.500-1c-.8 4-2 7-4 9.500-1.500 1.200-4.500 1.200-6 0C10.200 25.500 9.400 21 9.400 15z" />
                </svg>
              </ChromeButton>
            </ToolbarSide>
            <Address>
              <AddressInput aria-label="Address" />
              <BareButton aria-label="Reload">
                <Line w={28} h={28} tone="#7c7c7c">
                  <path d="M24 15a10 10 0 1 1-9-10" />
                  <path d="M14 0l8 5.500-8 5z" fill="#7c7c7c" stroke="none" />
                </Line>
              </BareButton>
            </Address>
            <ToolbarSide $end>
              <ChromeButton aria-label="Share">
                <Line w={24} h={32}>
                  <path d="M8 12H2v18h20V12h-6M12 21V3M6.500 8 12 2l5.500 6" />
                </Line>
              </ChromeButton>
              <ChromeButton aria-label="Show tabs">
                <Line w={26} h={26}>
                  <rect x="2" y="8" width="16" height="16" rx="1.500" />
                  <path d="M7 5V2h17v16h-3" />
                </Line>
              </ChromeButton>
              <NewTab aria-label="New tab">
                <Line w={24} h={24} tone="#666"><path d="M12 1v22M1 12h22" /></Line>
              </NewTab>
            </ToolbarSide>
          </Toolbar>

          <Header>
            <Counters>
              <Counter $alert>0</Counter>
              <Counter>0</Counter>
            </Counters>
            <Nav>
              <NavLink href="#things" $active>THINGS</NavLink>
              <NavLink href="#analyze">ANALYZE</NavLink>
              <NavLink href="#settings">SETTINGS</NavLink>
            </Nav>
            <UserButton>
              <svg width="48" height="48" viewBox="0 0 48 48" aria-hidden="true">
                <circle cx="24" cy="24" r="24" fill="#0b78bb" />
                <path d="M24.500 9.500V22M15 14.500A13.500 13.500 0 1 0 24.500 10.500c3 0 6 .8 8.500 3" fill="none" stroke="#fff" strokeWidth="6" strokeLinecap="round" strokeLinejoin="round" />
              </svg>
              <UserName>PONTUS AURDAL <Caret /></UserName>
            </UserButton>
          </Header>

          <Body>
            <Sidebar>
              <AllThings href="#all">
                <Icon>
                  <path d="M12 2C6.480 2 2 6.480 2 12s4.480 10 10 10 10-4.480 10-10S17.520 2 12 2zM8 17.500c-1.380 0-2.500-1.120-2.500-2.500s1.120-2.500 2.500-2.500 2.500 1.120 2.500 2.500-1.120 2.500-2.500 2.500zM9.500 8c0-1.380 1.120-2.500 2.500-2.500s2.500 1.120 2.500 2.500-1.120 2.500-2.500 2.500S9.500 9.380 9.500 8zm6.500 9.500c-1.380 0-2.500-1.120-2.500-2.500s1.120-2.500 2.500-2.500 2.500 1.120 2.500 2.500-1.120 2.500-2.500 2.500z" />
                </Icon>
                All Things
              </AllThings>
              <NewTypeButton><PlusIcon />NEW THING TYPE</NewTypeButton>
              <TypeLink href="#fipy"><TypeCount>1</TypeCount><TypeName>FiPy dev-kit ...</TypeName></TypeLink>
              <SectionLabel>Gateways</SectionLabel>
            </Sidebar>

            <Main>
              <TitleCard>
                <IconButton as="span" $tone={color.grey}>
                  <Icon>
                    <circle cx="12" cy="12" r="9" fill="none" stroke="currentColor" strokeWidth="2" />
                    <circle cx="12" cy="8" r="2" /><circle cx="8" cy="14" r="2" /><circle cx="16" cy="14" r="2" />
                  </Icon>
                </IconButton>
                <Title>FiPy dev-kit</Title>
                <Actions>
                  <IconButton aria-label="Import" $tone={color.grey}>
                    <Icon>
                      <path fill="none" stroke="currentColor" strokeWidth="2" d="M10 7V5.500A1.500 1.500 0 0 1 11.500 4H18l5 5.500v10a1.500 1.500 0 0 1-1.500 1.500h-10a1.500 1.500 0 0 1-1.500-1.500V17M0 12h11M7 7.500l4.500 4.500L7 16.500" />
                      <path fill="none" stroke="currentColor" strokeWidth="1.800" d="M16 4v7h7" />
                    </Icon>
                  </IconButton>
                  <IconButton aria-label="Edit">
                    <Icon><path d="M3 17.250V21h3.750L17.810 9.940l-3.750-3.750L3 17.250zM20.710 7.040a1 1 0 0 0 0-1.410l-2.340-2.340a1 1 0 0 0-1.410 0l-1.830 1.830 3.750 3.750 1.830-1.830z" /></Icon>
                  </IconButton>
                  <IconButton aria-label="Delete">
                    <Icon><path d="M6 19c0 1.100.9 2 2 2h8c1.100 0 2-.9 2-2V7H6v12zM19 4h-3.500l-1-1h-5l-1 1H5v2h14V4z" /></Icon>
                  </IconButton>
                  <ActionGroup>
                    <TextButton $tone={color.blue}><PlusIcon />THINGS</TextButton>
                    <IconButton aria-label="More thing actions" $tone="#757575"><ChevronIcon /></IconButton>
                  </ActionGroup>
                </Actions>
              </TitleCard>

              <ViewBar>
                <ViewPicker>
                  <ViewSelect aria-label="View" defaultValue="default">
                    <option value="default">Default View</option>
                  </ViewSelect>
                  <Caret />
                </ViewPicker>
                <PopoverAnchor>
                  <TabButton>Thing List</TabButton>
                  <Popover role="dialog" aria-label="Thing List notice">
                    <Message>
                      The Thing List tab will be removed going forward. Instead, the Thing List will be
                      available as a standard widget that can be placed in any dashboard.
                    </Message>
                    <Message>
                      Please add the Thing List widget to your dashboard(s) using the rearrange dashboard
                      widget <RearrangeIcon />, or with the button<br />below
                    </Message>
                    <AddWidgetButton>ADD THINGS LIST WIDGET</AddWidgetButton>
                  </Popover>
                </PopoverAnchor>
                <Actions>
                  <IconButton aria-label="Date range">
                    <Icon><path d="M20 3h-1V1h-2v2H7V1H5v2H4c-1.100 0-2 .9-2 2v16c0 1.100.9 2 2 2h16c1.100 0 2-.9 2-2V5c0-1.100-.9-2-2-2zm0 18H4V8h16v13z" /></Icon>
                  </IconButton>
                  <IconButton aria-label="Rearrange dashboard"><RearrangeIcon /></IconButton>
                  <ActionGroup $wide>
                    <TextButton><IconButton as="span"><PlusIcon /></IconButton>DASHBOARD</TextButton>
                    <IconButton aria-label="More">
                      <Icon><circle cx="12" cy="6" r="2" /><circle cx="12" cy="12" r="2" /><circle cx="12" cy="18" r="2" /></Icon>
                    </IconButton>
                  </ActionGroup>
                </Actions>
              </ViewBar>

              <Card>
                <FilterRow>
                  <IconButton aria-label="Expand" $tone={color.ink}><ChevronIcon /></IconButton>
                </FilterRow>
              </Card>

              <Card $accent $gap={96}>
                <CardTitle />
                <MapFrame>
                  <WorldMap />
                  <ZoomControl>
                    <ZoomButton aria-label="Zoom in"><Line w={20} h={20} tone="#b5b5b5" width={4}><path d="M10 0v20M0 10h20" /></Line></ZoomButton>
                    <ZoomButton aria-label="Zoom out"><Line w={20} h={20} tone="#b5b5b5" width={4}><path d="M0 10h20" /></Line></ZoomButton>
                  </ZoomControl>
                </MapFrame>
              </Card>

              <Card $accent $gap={48}>
                <CardTitle>Events</CardTitle>
                <CardText>No events</CardText>
              </Card>
            </Main>
          </Body>
        </Window>
      </Desktop>
    </>
  );
}
